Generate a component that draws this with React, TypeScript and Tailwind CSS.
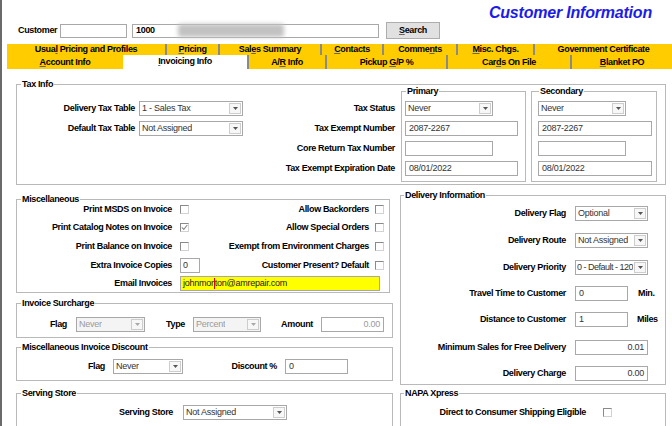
import React from "react";

const LBL = "font-bold text-[9px] tracking-[-0.35px] leading-[11px] text-black whitespace-nowrap";
const VAL = "text-[9px] tracking-[-0.25px] leading-[11px] text-[#333] whitespace-nowrap";
const VALDIS = "text-[9px] tracking-[-0.25px] leading-[11px] text-[#9a9a9a] whitespace-nowrap";

function Group({
  title,
  className = "",
  legendClass = "left-[4px]",
  children,
}: {
  title: string;
  className?: string;
  legendClass?: string;
  children?: React.ReactNode;
}) {
  return (
    <div className={`relative border border-[#b9b9b9] ${className}`}>
      <span className={`absolute top-[-6px] ${legendClass} bg-white px-[1px] ${LBL}`}>{title}</span>
      {children}
    </div>
  );
}

function Arrow({ disabled }: { disabled?: boolean }) {
  return (
    <div className="ml-auto mr-[1px] w-[12px] h-[11px] border border-[#cdcdcd] bg-[#f7f7f7] flex items-center justify-center shrink-0">
      <svg width="5" height="3" viewBox="0 0 5 3">
        <path d="M0 0H5L2.5 3Z" fill={disabled ? "#a8a8a8" : "#555"} />
      </svg>
    </div>
  );
}

function Select({
  text,
  className = "",
  textClass = "",
  disabled,
}: {
  text: string;
  className?: string;
  textClass?: string;
  disabled?: boolean;
}) {
  return (
    <div className={`h-[15px] border border-[#a8a8a8] bg-white flex items-center pl-[2px] shrink-0 ${className}`}>
      <span className={`min-w-0 overflow-hidden ${disabled ? VALDIS : VAL} ${textClass}`}>{text}</span>
      <Arrow disabled={disabled} />
    </div>
  );
}

function Input({
  text = "",
  className = "",
  right,
  disabled,
}: {
  text?: string;
  className?: string;
  right?: boolean;
  disabled?: boolean;
}) {
  return (
    <div
      className={`h-[15px] border border-[#a8a8a8] bg-white flex items-center px-[3px] shrink-0 ${
        right ? "justify-end" : ""
      } ${className}`}
    >
      <span className={disabled ? VALDIS : VAL}>{text}</span>
    </div>
  );
}

function Check({ checked }: { checked?: boolean }) {
  return (
    <div className="w-[9px] h-[9px] border border-t-[#8a8a8a] border-l-[#8a8a8a] border-r-[#d2d2d2] border-b-[#d2d2d2] bg-white flex items-center justify-center shrink-0">
      {checked && (
        <svg width="7" height="7" viewBox="0 0 7 7">
          <path d="M0.8 3.4L2.8 5.4L6.3 1" stroke="#8a8a8a" strokeWidth="1.1" fill="none" />
        </svg>
      )}
    </div>
  );
}

function Label({ children, className = "" }: { children: React.ReactNode; className?: string }) {
  return <div className={`text-right shrink-0 ${LBL} ${className}`}>{children}</div>;
}

function Tab({
  w,
  children,
  divider = true,
  selected,
}: {
  w: string;
  children: React.ReactNode;
  divider?: boolean;
  selected?: boolean;
}) {
  return (
    <div
      className={`${w} h-full flex items-center justify-center shrink-0 ${LBL} ${
        selected ? "bg-white pb-[2px]" : "bg-[#ffcc00]"
      } ${divider ? "border-l-[2px] border-l-[#8a8a8a]" : ""}`}
    >
      <span>{children}</span>
    </div>
  );
}

export default function App() {
  return (
    <div
      className="w-[672px] h-[426px] overflow-hidden bg-white border-l-[2px] border-l-[#6a6a6a] flex flex-col"
      style={{ fontFamily: '"Liberation Sans", Arial, sans-serif' }}
    >
      {/* Title */}
      <div className="h-[22px] flex justify-end items-end pr-[20px] shrink-0">
        <span className="text-[16px] leading-[18px] font-bold italic tracking-[-0.2px] text-[#1c1ce8]">
          Customer Information
        </span>
      </div>

      {/* Customer row */}
      <div className="h-[17px] flex items-center pl-[16px] shrink-0">
        <span className={`w-[42px] ${LBL}`}>Customer</span>
        <div className="w-[67px] h-[14px] border border-[#a8a8a8] bg-white" />
        <div className="ml-[5px] w-[247px] h-[14px] border border-[#a8a8a8] bg-white flex items-center pl-[3px]">
          <span className={`w-[42px] font-bold text-[9px] leading-[11px] tracking-[-0.3px] text-black`}>1000</span>
          <div className="w-[106px] h-[13px] bg-[#c2c2c2] blur-[2px] rounded-[3px]" />
        </div>
        <div className="ml-[7px] w-[54px] h-[17px] bg-[#e1e1e1] border border-[#adadad] flex items-center justify-center">
          <span className={LBL}>
            <u className="decoration-[#666]">S</u>earch
          </span>
        </div>
      </div>

      {/* Tabs */}
      <div className="mt-[5px] ml-[5px] flex flex-col shrink-0">
        <div className="h-[11px] flex">
          <Tab w="w-[158px]" divider={false}>
            Usua<u className="decoration-[#666]">l</u> Pricing and Profiles
          </Tab>
          <Tab w="w-[53px]">
            <u className="decoration-[#666]">P</u>ricing
          </Tab>
          <Tab w="w-[102px]">
            Sal<u className="decoration-[#666]">e</u>s Summary
          </Tab>
          <Tab w="w-[62px]">
            <u className="decoration-[#666]">C</u>ontacts
          </Tab>
          <Tab w="w-[74px]">
            Comme<u className="decoration-[#666]">n</u>ts
          </Tab>
          <Tab w="w-[77px]">
            <u className="decoration-[#666]">M</u>isc. Chgs.
          </Tab>
          <Tab w="flex-1">Government Certificate</Tab>
        </div>
        <div className="h-[14px] flex">
          <Tab w="w-[116px]" divider={false}>
            <u className="decoration-[#666]">A</u>ccount Info
          </Tab>
          <Tab w="w-[124px]" divider={false} selected>
            <u className="decoration-[#666]">I</u>nvoicing Info
          </Tab>
          <Tab w="w-[78px]">
            A/<u className="decoration-[#666]">R</u> Info
          </Tab>
          <Tab w="w-[121px]">
            Pickup <u className="decoration-[#666]">G</u>/P %
          </Tab>
          <Tab w="w-[124px]">
            Car<u className="decoration-[#666]">d</u>s On File
          </Tab>
          <Tab w="flex-1">
            <u className="decoration-[#666]">B</u>lanket PO
          </Tab>
        </div>
      </div>

      {/* Tax Info */}
      <Group title="Tax Info" className="ml-[14px] mt-[15px] w-[650px] h-[101px] shrink-0">
        <div className="flex items-start">
          <div className="mt-[16px] w-[118px] flex flex-col gap-[5px]">
            <div className="h-[15px] flex items-center justify-end">
              <Label>Delivery Tax Table</Label>
            </div>
            <div className="h-[15px] flex items-center justify-end">
              <Label>Default Tax Table</Label>
            </div>
          </div>
          <div className="mt-[16px] ml-[4px] w-[104px] flex flex-col gap-[5px]">
            <Select text="1 - Sales Tax" className="w-[104px]" />
            <Select text="Not Assigned" className="w-[104px]" />
          </div>
          <div className="mt-[16px] w-[152px] flex flex-col gap-[5px]">
            <div className="h-[15px] flex items-center justify-end">
              <Label>Tax Status</Label>
            </div>
            <div className="h-[15px] flex items-center justify-end">
              <Label>Tax Exempt Number</Label>
            </div>
            <div className="h-[15px] flex items-center justify-end">
              <Label>Core Return Tax Number</Label>
            </div>
            <div className="h-[15px] flex items-center justify-end">
              <Label>Tax Exempt Expiration Date</Label>
            </div>
          </div>
          <Group title="Primary" className="ml-[6px] mt-[6px] w-[125px] h-[91px] shrink-0">
            <div className="pl-[3px] pt-[9px] flex flex-col gap-[5px]">
              <Select text="Never" className="w-[88px]" />
              <Input text="2087-2267" className="w-[113px]" />
              <Input className="w-[88px]" />
              <Input text="08/01/2022" className="w-[113px]" />
            </div>
          </Group>
          <Group title="Secondary" legendClass="left-[7px]" className="ml-[5px] mt-[6px] w-[126px] h-[91px] shrink-0">
            <div className="pl-[6px] pt-[9px] flex flex-col gap-[5px]">
              <Select text="Never" className="w-[88px]" />
              <Input text="2087-2267" className="w-[114px]" />
              <Input className="w-[88px]" />
              <Input text="08/01/2022" className="w-[114px]" />
            </div>
          </Group>
        </div>
      </Group>

      {/* Lower area */}
      <div className="mt-[10px] flex items-start">
        {/* Left column */}
        <div className="ml-[14px] w-[377px] flex flex-col">
          <Group title="Miscellaneous" className="mt-[4px] w-[374px] h-[94px]">
            <div className="pt-[2px] flex flex-col">
              <div className="h-[15px] flex items-center">
                <div className="w-[210px] flex items-center">
                  <Label className="w-[155px]">Print MSDS on Invoice</Label>
                  <div className="ml-[8px]">
                    <Check />
                  </div>
                </div>
                <Label className="w-[142px]">Allow Backorders</Label>
                <div className="ml-[6px]">
                  <Check />
                </div>
              </div>
              <div className="mt-[3px] h-[15px] flex items-center">
                <div className="w-[210px] flex items-center">
                  <Label className="w-[155px]">Print Catalog Notes on Invoice</Label>
                  <div className="ml-[8px]">
                    <Check checked />
                  </div>
                </div>
                <Label className="w-[142px]">Allow Special Orders</Label>
                <div className="ml-[6px]">
                  <Check />
                </div>
              </div>
              <div className="mt-[4px] h-[15px] flex items-center">
                <div className="w-[210px] flex items-center">
                  <Label className="w-[155px]">Print Balance on Invoice</Label>
                  <div className="ml-[8px]">
                    <Check />
                  </div>
                </div>
                <Label className="w-[142px]">Exempt from Environment Charges</Label>
                <div className="ml-[6px]">
                  <Check />
                </div>
              </div>
              <div className="mt-[4px] h-[15px] flex items-center">
                <div className="w-[210px] flex items-center">
                  <Label className="w-[155px]">Extra Invoice Copies</Label>
                  <div className="ml-[8px]">
                    <Input text="0" className="w-[20px] !px-[2px]" />
                  </div>
                </div>
                <Label className="w-[142px]">Customer Present? Default</Label>
                <div className="ml-[6px]">
                  <Check />
                </div>
              </div>
              <div className="mt-[3px] h-[15px] flex items-center">
                <Label className="w-[155px]">Email Invoices</Label>
                <div className="ml-[8px] w-[200px] h-[15px] border border-[#a8a8a8] bg-[#ffff00] flex items-center pl-[2px]">
                  <span className={`${VAL} !text-[#222]`}>johnmor</span>
                  <span className="inline-block w-[1px] h-[11px] bg-[#e00000]" />
                  <span className={`${VAL} !text-[#222]`}>ton@amrepair.com</span>
                </div>
              </div>
            </div>
          </Group>

          <Group title="Invoice Surcharge" className="mt-[10px] w-[377px] h-[35px]">
            <div className="pt-[13px] flex items-center h-[28px]">
              <Label className="w-[50px]">Flag</Label>
              <Select text="Never" disabled className="ml-[9px] w-[69px] !bg-[#f4f4f4]" />
              <Label className="w-[40px]">Type</Label>
              <Select text="Percent" disabled className="ml-[8px] w-[68px] !bg-[#f4f4f4]" />
              <Label className="w-[52px]">Amount</Label>
              <Input text="0.00" right disabled className="ml-[8px] w-[63px]" />
            </div>
          </Group>

          <Group title="Miscellaneous Invoice Discount" className="mt-[9px] w-[377px] h-[34px]">
            <div className="pt-[11px] flex items-center h-[26px]">
              <Label className="w-[88px]">Flag</Label>
              <Select text="Never" className="ml-[8px] w-[70px]" />
              <Label className="w-[94px]">Discount %</Label>
              <Input text="0" className="ml-[8px] w-[63px]" />
            </div>
          </Group>

          <Group title="Serving Store" className="mt-[12px] w-[377px] h-[40px]">
            <div className="pt-[11px] flex items-center h-[26px]">
              <Label className="w-[156px]">Serving Store</Label>
              <Select text="Not Assigned" className="ml-[10px] w-[104px]" />
            </div>
          </Group>
        </div>

        {/* Right column */}
        <div className="ml-[7px] w-[266px] flex flex-col">
          <Group title="Delivery Information" legendClass="left-[3px]" className="w-[266px] h-[190px]">
            <div className="pt-[10px] flex flex-col">
              <div className="h-[15px] flex items-center">
                <Label className="w-[165px]">Delivery Flag</Label>
                <Select text="Optional" className="ml-[9px] w-[73px]" />
              </div>
              <div className="mt-[12px] h-[15px] flex items-center">
                <Label className="w-[165px]">Delivery Route</Label>
                <Select text="Not Assigned" className="ml-[9px] w-[73px]" />
              </div>
              <div className="mt-[12px] h-[15px] flex items-center">
                <Label className="w-[165px]">Delivery Priority</Label>
                <Select
                  text="0 - Default - 120"
                  className="ml-[9px] w-[73px] !pl-[1px]"
                  textClass="!tracking-[-0.5px]"
                />
              </div>
              <div className="mt-[11px] h-[15px] flex items-center">
                <Label className="w-[165px]">Travel Time to Customer</Label>
                <Input text="0" className="ml-[9px] w-[53px]" />
                <span className={`ml-[10px] ${LBL}`}>Min.</span>
              </div>
              <div className="mt-[11px] h-[15px] flex items-center">
                <Label className="w-[165px]">Distance to Customer</Label>
                <Input text="1" className="ml-[9px] w-[53px]" />
                <span className={`ml-[9px] ${LBL}`}>Miles</span>
              </div>
              <div className="mt-[13px] h-[15px] flex items-center">
                <Label className="w-[165px]">Minimum Sales for Free Delivery</Label>
                <Input text="0.01" right className="ml-[9px] w-[73px]" />
              </div>
              <div className="mt-[11px] h-[15px] flex items-center">
                <Label className="w-[165px]">Delivery Charge</Label>
                <Input text="0.00" right className="ml-[9px] w-[73px]" />
              </div>
            </div>
          </Group>

          <Group title="NAPA Xpress" legendClass="left-[3px]" className="mt-[8px] w-[266px] h-[40px]">
            <div className="pt-[11px] flex items-center h-[26px]">
              <Label className="w-[185px]">Direct to Consumer Shipping Eligible</Label>
              <div className="ml-[17px]">
                <Check />
              </div>
            </div>
          </Group>
        </div>
      </div>
    </div>
  );
}
